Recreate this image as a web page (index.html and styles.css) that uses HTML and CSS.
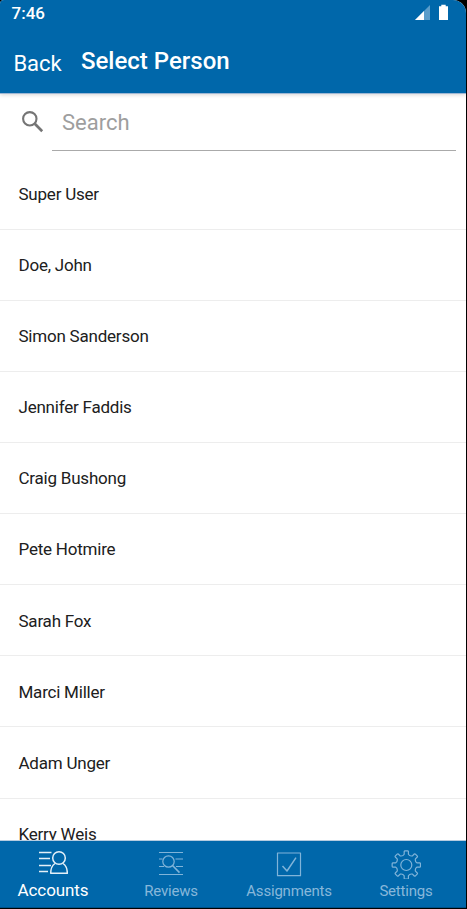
FILE: index.html
```html
<!DOCTYPE html>
<html lang="en">
<head>
<meta charset="utf-8">
<title>Select Person</title>
<link rel="stylesheet" href="styles.css">
</head>
<body>
<div class="screen">
  <header class="header">
    <div class="status">
      <span class="time">7:46</span>
      <svg class="status-icons" width="36" height="17" viewBox="0 0 36 17">
        <path d="M0 16L15 1V16Z" fill="#5b9dca"/>
        <path d="M0 16L9 7V16Z" fill="#fff"/>
        <path d="M24 2.3H26.3V.7H30.7V2.3H33V16H24Z" fill="#fff"/>
      </svg>
    </div>
    <div class="toolbar">
      <span class="back">Back</span>
      <h1 class="title">Select Person</h1>
    </div>
  </header>
  <div class="search">
    <svg class="search-icon" width="22" height="22" viewBox="0 0 22 22" fill="none" stroke="#757575" stroke-width="2.1">
      <circle cx="7.8" cy="7.8" r="6.7"/>
      <path d="M12.8 12.8L20.2 20.2" stroke-width="2.7"/>
    </svg>
    <div class="search-field">Search</div>
  </div>
  <ul class="list">
    <li>Super User</li>
    <li>Doe, John</li>
    <li>Simon Sanderson</li>
    <li>Jennifer Faddis</li>
    <li>Craig Bushong</li>
    <li>Pete Hotmire</li>
    <li>Sarah Fox</li>
    <li>Marci Miller</li>
    <li>Adam Unger</li>
    <li>Kerry Weis</li>
  </ul>
  <nav class="tabs">
    <div class="tab active">
      <svg width="30" height="30" viewBox="0 0 30 30">
        <path d="M1 5.5H13.5M1 11.5H12M1 18.5H13M1 24.5H10"/>
        <circle cx="21" cy="11" r="6.3"/>
        <path d="M17 16.5C14 18.5 12.7 21.5 12.7 26.3H29.3C29.3 21.5 28 18.5 25 16.5"/>
      </svg>
      <span>Accounts</span>
    </div>
    <div class="tab">
      <svg width="30" height="30" viewBox="0 0 30 30">
        <path d="M3 5.5H27M3 12H6.5M19.5 12H27M3 19.5H8M20 19.5H27M3 27.5H27"/>
        <circle cx="12.5" cy="14.5" r="5.7"/>
        <path d="M16.5 18.5L23.5 25.6" stroke-width="1.6"/>
      </svg>
      <span>Reviews</span>
    </div>
    <div class="tab">
      <svg width="30" height="30" viewBox="0 0 30 30">
        <path d="M3.5 6H26.5V28.7H3.5Z"/>
        <path d="M8.5 19L13 24L22 10.7" stroke-width="1.5"/>
      </svg>
      <span>Assignments</span>
    </div>
    <div class="tab">
      <svg width="30" height="32" viewBox="0 0 30 32">
        <path id="gear" d=""/>
        <circle cx="15.3" cy="18" r="5.5"/>
      </svg>
      <span class="settings-label">Settings</span>
    </div>
  </nav>
</div>
<script src="gear.js"></script>
</body>
</html>
```
FILE: styles.css
```css
* { box-sizing: border-box; }
body { margin: 0; background: #000; font-family: Roboto, "Liberation Sans", sans-serif; }
.screen {
  width: 466px;
  height: 908px;
  display: flex;
  flex-direction: column;
  overflow: hidden;
  background: #fff;
  border-radius: 4px 13px 0 0;
}
.header {
  flex: none;
  height: 94px;
  background: #0067aa;
  color: #fff;
  border-bottom: 1px solid #9eb7d4;
  box-shadow: 0 1px 4px rgba(0, 0, 0, .16);
}
.status {
  height: 28px;
  padding: 4px 15px 0 11.5px;
  display: flex;
  justify-content: space-between;
}
.time { font-size: 17px; line-height: 18px; font-weight: 500; }
.toolbar { display: flex; padding: 19px 0 0 13.5px; gap: 19.5px; }
.back { font-size: 22px; line-height: 34px; letter-spacing: -.1px; }
.title { margin: 0; font-size: 24px; line-height: 29px; font-weight: 500; }
.search {
  flex: none;
  height: 64.7px;
  padding: 0 10px 0 22px;
  display: flex;
}
.search-icon { margin: 17px 8px 0 0; }
.search-field {
  flex: 1;
  height: 57px;
  padding: 14px 10px 0;
  border-bottom: 1px solid #aaa;
  font-size: 22px;
  line-height: 30px;
  color: #9e9e9e;
}
.list {
  flex: 1;
  min-height: 0;
  overflow: hidden;
  margin: 0;
  padding: 0;
  list-style: none;
  color: #202020;
}
.list li {
  height: 71.1px;
  padding: 25.3px 18.5px 0;
  border-bottom: 1px solid #ededed;
  font-size: 17px;
  line-height: 20px;
  letter-spacing: -.22px;
}
.tabs {
  flex: none;
  height: 68px;
  display: grid;
  grid-template-columns: 107px 128px 108px 126px;
  justify-items: center;
  background: #0067aa;
  border-top: 1px solid #b5cce0;
  border-bottom: 1px solid #00528a;
}
.tab { padding-top: 6px; text-align: center; color: #87b7da; font-size: 15px; letter-spacing: -.2px; }
.tab svg { display: block; margin: 0 auto; fill: none; stroke: #80b4d9; stroke-width: 1.2; stroke-linejoin: round; }
.tab span { display: block; line-height: 20px; margin-top: 4px; }
.tab .settings-label { margin-top: 2px; }
.active { color: #fff; font-size: 17px; letter-spacing: -.1px; }
.active svg { stroke: #e4f0f8; stroke-width: 1.5; }
.tab.active span { margin: 3px 1px 0 0; }
```
FILE: gear.js
```js
// Eight-toothed gear outline with rounded valleys between the teeth
const point = (radius, degrees) => {
  const a = degrees * Math.PI / 180;
  return (15.3 + radius * Math.sin(a)).toFixed(2) + " " + (18 - radius * Math.cos(a)).toFixed(2);
};
let outline = "M" + point(11, -11);
for (let i = 0; i < 8; i++) {
  const d = i * 45;
  outline += "L" + point(13.6, d - 9) + "Q" + point(14.3, d - 8) + " " + point(14.2, d - 5);
  outline += "L" + point(14.2, d + 5) + "Q" + point(14.3, d + 8) + " " + point(13.6, d + 9);
  outline += "L" + point(11, d + 11) + "Q" + point(9.2, d + 22.5) + " " + point(11, d + 34);
}
document.getElementById("gear").setAttribute("d", outline + "Z");
```
